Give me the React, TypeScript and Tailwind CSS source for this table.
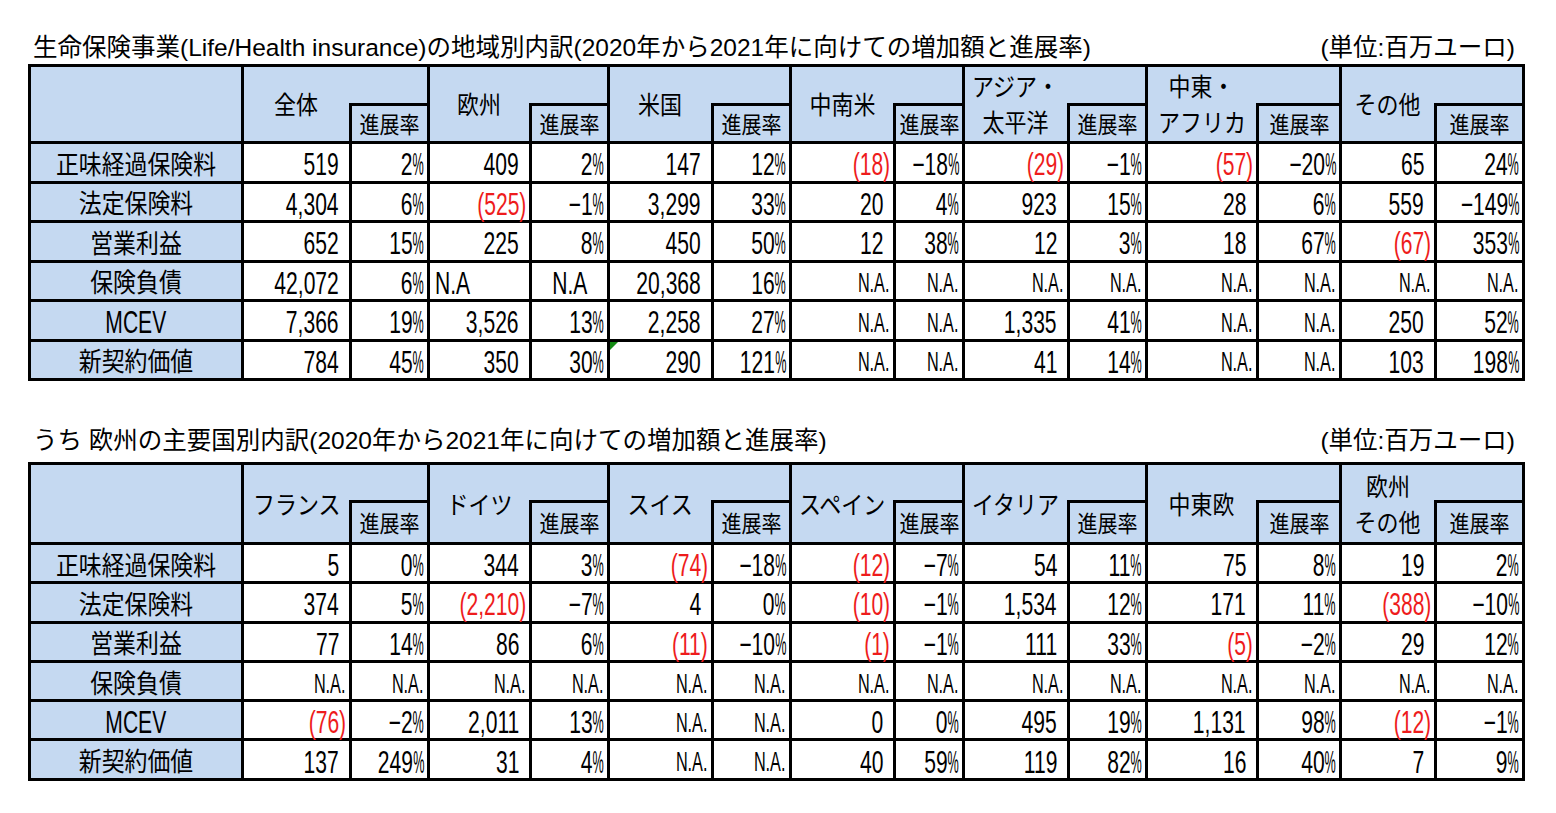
import React from "react";

type Row = { label: string; cells: string[] };

const t1Groups = [["全体"], ["欧州"], ["米国"], ["中南米"], ["アジア・", "太平洋"], ["中東・", "アフリカ"], ["その他"]];

const t1Rows: Row[] = [
  { label: "正味経過保険料", cells: ["519", "2%", "409", "2%", "147", "12%", "(18)", "−18%", "(29)", "−1%", "(57)", "−20%", "65", "24%"] },
  { label: "法定保険料", cells: ["4,304", "6%", "(525)", "−1%", "3,299", "33%", "20", "4%", "923", "15%", "28", "6%", "559", "−149%"] },
  { label: "営業利益", cells: ["652", "15%", "225", "8%", "450", "50%", "12", "38%", "12", "3%", "18", "67%", "(67)", "353%"] },
  { label: "保険負債", cells: ["42,072", "6%", "N.A", "N.A", "20,368", "16%", "N.A.", "N.A.", "N.A.", "N.A.", "N.A.", "N.A.", "N.A.", "N.A."] },
  { label: "MCEV", cells: ["7,366", "19%", "3,526", "13%", "2,258", "27%", "N.A.", "N.A.", "1,335", "41%", "N.A.", "N.A.", "250", "52%"] },
  { label: "新契約価値", cells: ["784", "45%", "350", "30%", "290", "121%", "N.A.", "N.A.", "41", "14%", "N.A.", "N.A.", "103", "198%"] },
];

const t2Groups = [["フランス"], ["ドイツ"], ["スイス"], ["スペイン"], ["イタリア"], ["中東欧"], ["欧州", "その他"]];

const NA = ["N.A.", "N.A.", "N.A.", "N.A.", "N.A.", "N.A.", "N.A.", "N.A.", "N.A.", "N.A.", "N.A.", "N.A.", "N.A.", "N.A."];

const t2Rows: Row[] = [
  { label: "正味経過保険料", cells: ["5", "0%", "344", "3%", "(74)", "−18%", "(12)", "−7%", "54", "11%", "75", "8%", "19", "2%"] },
  { label: "法定保険料", cells: ["374", "5%", "(2,210)", "−7%", "4", "0%", "(10)", "−1%", "1,534", "12%", "171", "11%", "(388)", "−10%"] },
  { label: "営業利益", cells: ["77", "14%", "86", "6%", "(11)", "−10%", "(1)", "−1%", "111", "33%", "(5)", "−2%", "29", "12%"] },
  { label: "保険負債", cells: NA },
  { label: "MCEV", cells: ["(76)", "−2%", "2,011", "13%", "N.A.", "N.A.", "0", "0%", "495", "19%", "1,131", "98%", "(12)", "−1%"] },
  { label: "新契約価値", cells: ["137", "249%", "31", "4%", "N.A.", "N.A.", "40", "59%", "119", "82%", "16", "40%", "7", "9%"] },
];

function Value({ v, pct }: { v: string; pct: boolean }) {
  if (v === "N.A.") {
    return <span className="inline-block origin-right scale-x-[0.58] whitespace-nowrap text-[28px] leading-none">N.A.</span>;
  }
  const red = v.startsWith("(");
  const hasPct = v.endsWith("%");
  const body = hasPct ? v.slice(0, -1) : v;
  return (
    <span
      className={`inline-block scale-x-[0.68] whitespace-nowrap text-[31px] leading-none ${v === "N.A" ? (pct ? "origin-center" : "origin-left") : "origin-right"} ${red ? "text-[#ee1c1c]" : ""}`}
    >
      {body}
      {hasPct && <span className="-mr-[11px] inline-block origin-left scale-x-[0.6]">%</span>}
    </span>
  );
}

function cellPad(v: string, pct: boolean) {
  if (v === "N.A") return pct ? "justify-center" : "justify-start pl-[5px]";
  if (v === "N.A.") return "justify-end pr-[4px]";
  if (pct || v.startsWith("(")) return "justify-end pr-[3px]";
  return "justify-end pr-[10px]";
}

function Label({ text }: { text: string }) {
  if (text === "MCEV") {
    return <span className="inline-block origin-center scale-x-[0.68] text-[31px] leading-none">MCEV</span>;
  }
  return <span className="inline-block origin-center scale-x-[0.88] whitespace-nowrap text-[26px] leading-none">{text}</span>;
}

function Table({ groups, rows, rowsClass, subH, flag }: { groups: string[][]; rows: Row[]; rowsClass: string; subH: string; flag?: [number, number] }) {
  return (
    <div
      className={`grid w-fit gap-[3px] bg-black p-[3px] grid-cols-[210px_105px_75px_99px_75px_101px_75px_101px_66px_102px_75px_108px_80px_92px_85px] ${rowsClass}`}
    >
      <div className="bg-[#c5d9f1]" />
      {groups.map((g, i) => (
        <div key={i} className="col-span-2 grid grid-cols-subgrid bg-[#c5d9f1]">
          <div className="flex flex-col items-center justify-center pt-[2px]">
            {g.map((line) => (
              <span key={line} className="inline-block origin-center scale-x-[0.88] whitespace-nowrap text-[25px] leading-[36px]">
                {line}
              </span>
            ))}
          </div>
          <div className="flex flex-col justify-end">
            <div className={`-ml-[3px] flex items-center justify-center border-l-[3px] border-t-[3px] border-black pt-[3px] ${subH}`}>
              <span className="inline-block origin-center scale-x-[0.87] whitespace-nowrap text-[23px] leading-none">進展率</span>
            </div>
          </div>
        </div>
      ))}
      {rows.map((r, ri) => (
        <React.Fragment key={r.label}>
          <div className="flex items-center justify-center bg-[#c5d9f1] pt-[5px]">
            <Label text={r.label} />
          </div>
          {r.cells.map((v, ci) => {
            const pct = ci % 2 === 1;
            const flagged = flag && flag[0] === ri && flag[1] === ci;
            return (
              <div key={ci} className={`relative flex items-center bg-white pt-[5px] ${cellPad(v, pct)}`}>
                {flagged && (
                  <span className="absolute left-0 top-0 h-0 w-0 border-r-[8px] border-t-[8px] border-r-transparent border-t-[#138a13]" />
                )}
                <Value v={v} pct={pct} />
              </div>
            );
          })}
        </React.Fragment>
      ))}
    </div>
  );
}

function Title({ text }: { text: string }) {
  return (
    <div className="flex items-center justify-between pl-[5px] pr-[10px] text-[24.5px] leading-none">
      <span className="whitespace-nowrap">{text}</span>
      <span className="whitespace-nowrap">(単位:百万ユーロ)</span>
    </div>
  );
}

export default function App() {
  return (
    <div className="min-h-screen bg-white font-['Liberation_Sans','Noto_Sans_CJK_JP',sans-serif] text-black">
      <div className="w-[1525px] pl-[28px] pt-[36px]">
        <div className="h-[28px]">
          <Title text="生命保険事業(Life/Health insurance)の地域別内訳(2020年から2021年に向けての増加額と進展率)" />
        </div>
        <Table groups={t1Groups} rows={t1Rows} rowsClass="grid-rows-[74px_repeat(6,36.5px)]" subH="h-[38px]" flag={[5, 4]} />
        <div className="mt-[48px] h-[33px]">
          <Title text={"うち\u00a0欧州の主要国別内訳(2020年から2021年に向けての増加額と進展率)"} />
        </div>
        <Table groups={t2Groups} rows={t2Rows} rowsClass="grid-rows-[77px_repeat(6,36.3px)]" subH="h-[42px]" />
      </div>
    </div>
  );
}
